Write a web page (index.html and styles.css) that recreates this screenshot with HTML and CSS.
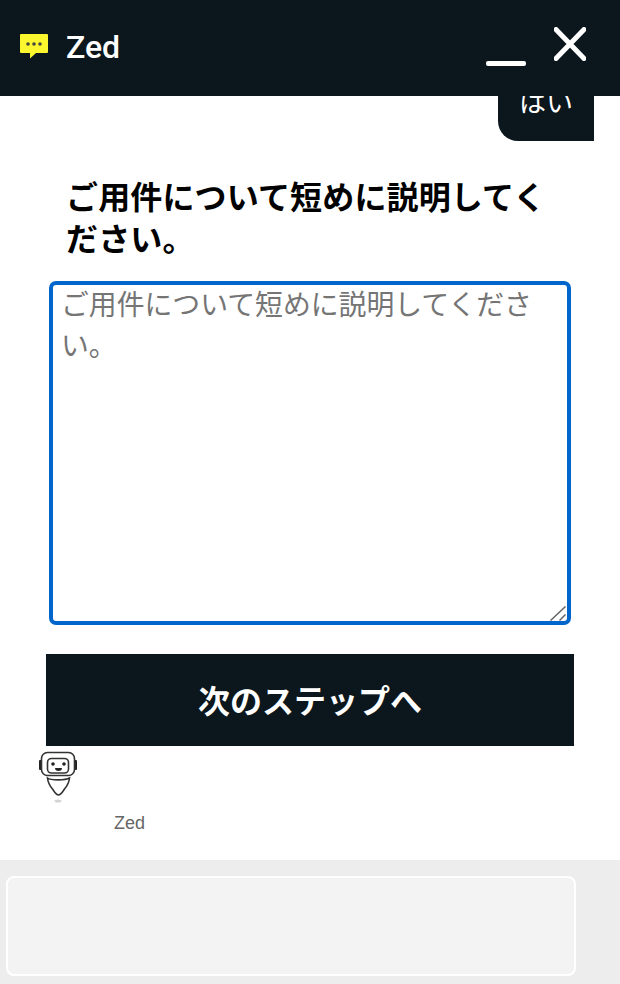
FILE: index.html
```html
<!DOCTYPE html>
<html lang="ja">
<head>
<meta charset="utf-8">
<title>Zed</title>
<link rel="stylesheet" href="styles.css">
</head>
<body>
<div class="chat">
  <header class="head">
    <svg class="logo" viewBox="0 0 28 25" aria-hidden="true">
      <path class="logo-bubble" d="M0 1a1 1 0 0 1 1-1h26a1 1 0 0 1 1 1v17a1 1 0 0 1-1 1h-11l-6 5.500v-5.500h-9a1 1 0 0 1-1-1z"/>
      <circle class="logo-dot" cx="8" cy="10" r="1.800"/>
      <circle class="logo-dot" cx="14" cy="10" r="1.800"/>
      <circle class="logo-dot" cx="20" cy="10" r="1.800"/>
    </svg>
    <span class="brand">Zed</span>
    <div class="controls">
      <span class="minimize"></span>
      <svg class="close" viewBox="0 0 32 34" aria-hidden="true">
        <path d="M2 2.500 30 31.500M30 2.500 2 31.500"/>
      </svg>
    </div>
  </header>
  <main class="log">
    <div class="reply">はい</div>
    <section class="form">
      <h2 class="prompt">ご用件について短めに説明してください。</h2>
      <div class="field-wrap">
        <textarea class="field" placeholder="ご用件について短めに説明してください。"></textarea>
        <svg class="grip" viewBox="0 0 17 15" aria-hidden="true">
          <path d="M0.500 14.500 15.500 0.500M9.500 14.500 15.500 8.500"/>
        </svg>
      </div>
      <button class="next" type="button">次のステップへ</button>
    </section>
    <div class="agent">
      <svg class="avatar" viewBox="0 0 40 60" aria-hidden="true">
        <rect class="ear" x="1" y="14" width="3" height="10" rx="1"/>
        <rect class="ear" x="36" y="14" width="3" height="10" rx="1"/>
        <rect class="line" x="3.500" y="6.500" width="33" height="23" rx="6"/>
        <rect class="line" x="9.500" y="12.500" width="21" height="14.500" rx="4"/>
        <circle class="ink" cx="15" cy="18" r="1.800"/>
        <circle class="ink" cx="26" cy="18" r="1.800"/>
        <path class="ink" d="M17 22h7a3.500 3 0 0 1-7 0z"/>
        <path class="line" d="M9.500 32c3 2.500 18 2.500 22 0-.5 5-2 7.500-5 11-2 3-3.500 6-6 6s-4-3-6-6c-3-3.500-4.500-6-5-11z"/>
        <ellipse class="shadow" cx="20" cy="55" rx="3.500" ry="1.500"/>
      </svg>
      <span class="agent-name">Zed</span>
    </div>
  </main>
  <footer class="foot">
    <div class="composer"></div>
  </footer>
</div>
</body>
</html>
```
FILE: styles.css
```css
* { box-sizing: border-box; }
html, body { margin: 0; height: 100%; }
body {
  font-family: "Liberation Sans", "Noto Sans CJK JP", sans-serif;
  background: #fff;
  color: #000;
}
.chat {
  display: flex;
  flex-direction: column;
  height: 984px;
  overflow: hidden;
}
.head {
  position: relative;
  z-index: 2;
  flex: 0 0 96px;
  display: flex;
  align-items: center;
  padding-left: 20px;
  background: #0b171c;
  color: #fff;
}
.logo { width: 28px; height: 25px; margin: -3px 18px 0 0; }
.logo-bubble { fill: #fcf62f; }
.logo-dot { fill: #45473f; }
.brand {
  font-family: Roboto, "Noto Sans", sans-serif;
  font-size: 32px;
  font-weight: 500;
  margin-top: -3px;
}
.controls {
  margin-left: auto;
  display: flex;
  align-items: flex-start;
  gap: 28px;
  padding-right: 34px;
  height: 96px;
}
.minimize {
  width: 40px;
  height: 5px;
  margin-top: 61px;
  border-radius: 2px;
  background: #fff;
}
.close { width: 32px; height: 34px; margin-top: 27px; }
.close path { fill: none; stroke: #fff; stroke-width: 5; stroke-linecap: round; }
.log {
  flex: 1;
  min-height: 0;
  display: flex;
  flex-direction: column;
}
.reply {
  align-self: flex-end;
  width: 96px;
  height: 66px;
  margin: -21px 26px 0 0;
  padding-top: 8px;
  text-align: center;
  font-size: 27px;
  line-height: 40px;
  color: #fff;
  background: #0b171c;
  border-bottom-left-radius: 20px;
}
.form {
  display: flex;
  flex-direction: column;
  padding: 0 46px;
}
.prompt {
  margin: 36px 0 20px 20px;
  width: 490px;
  font-size: 32px;
  line-height: 42px;
  font-weight: 700;
  letter-spacing: .15px;
}
.field-wrap {
  position: relative;
  width: 522px;
  height: 344px;
  margin-left: 3px;
}
.field {
  display: block;
  width: 100%;
  height: 100%;
  padding: 0 10px 0 8px;
  border: 4px solid #0066cc;
  border-radius: 7px;
  outline: none;
  resize: none;
  font-family: "Liberation Sans", "Noto Sans CJK JP", sans-serif;
  font-size: 27.850px;
  line-height: 41px;
  color: #000;
  background: #fff;
}
.field::placeholder { color: #757575; opacity: 1; }
.grip {
  position: absolute;
  right: 4px;
  bottom: 4px;
  width: 17px;
  height: 15px;
}
.grip path { fill: none; stroke: #666; stroke-width: 1.500; }
.next {
  height: 92px;
  margin-top: 29px;
  border: 0;
  padding: 0 0 2px;
  background: #0b171c;
  color: #fff;
  font-family: "Liberation Sans", "Noto Sans CJK JP", sans-serif;
  font-size: 32px;
  font-weight: 700;
}
.agent {
  display: flex;
  flex-direction: column;
  padding-left: 38px;
}
.avatar { width: 40px; height: 60px; }
.agent-name {
  margin: 6px 0 0 76px;
  font-size: 18px;
  line-height: 22px;
  color: #666;
}
.line { fill: #fff; stroke: #333; stroke-width: 1.600; }
.ear, .ink { fill: #222; }
.shadow { fill: #d4d4d4; }
.foot {
  flex: 0 0 124px;
  padding: 16px 44px 8px 6px;
  background: #ededed;
}
.composer {
  height: 100px;
  border: 2px solid #fff;
  border-radius: 8px;
  background: #f3f3f3;
}
```
